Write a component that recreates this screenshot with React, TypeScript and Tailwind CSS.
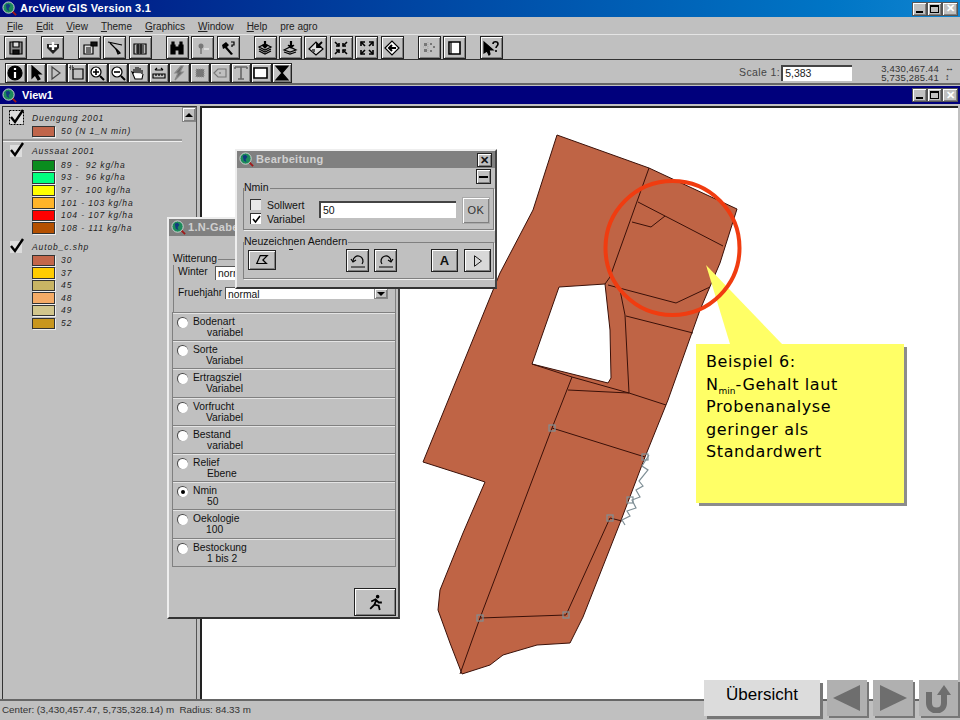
import type { ReactNode } from 'react'

const bevel = 'bg-[#c0c0c0] border border-[#222] shadow-[inset_1px_1px_0_#fff,inset_-1px_-1px_0_#808080]'

function Ico({ children, s = 16 }: { children: ReactNode; s?: number }) {
  return (
    <svg width={s} height={s} viewBox="0 0 16 16" fill="none" stroke="#000" strokeWidth="1.2">
      {children}
    </svg>
  )
}

function Globe({ s = 15 }: { s?: number }) {
  return (
    <svg width={s} height={s} viewBox="0 0 16 16" className="shrink-0">
      <path d="M10 10l5 5" stroke="#a01818" strokeWidth="2" />
      <circle cx="7" cy="7" r="6" fill="#1c8a5a" stroke="#d8d8d8" strokeWidth="1" />
      <path d="M4 4l3-1 2 2-2 3 1 3-3-2z" fill="#123a80" />
    </svg>
  )
}

function Tool({ w = 23, h = 23, children }: { w?: number; h?: number; children: ReactNode }) {
  return (
    <div className={`${bevel} flex items-center justify-center shrink-0`} style={{ width: w, height: h }}>
      {children}
    </div>
  )
}

function WinBtns() {
  return (
    <div className="flex ml-auto mr-[2px]">
      <div className={`${bevel} w-[15px] h-[14px] relative !border-[#555]`}>
        <div className="absolute left-[3px] bottom-[2px] w-[7px] h-[2px] bg-black" />
      </div>
      <div className={`${bevel} w-[15px] h-[14px] flex items-center justify-center !border-[#555]`}>
        <div className="w-[9px] h-[8px] border border-black border-t-2" />
      </div>
      <div className={`${bevel} w-[16px] h-[14px] flex items-center justify-center text-[11px] font-bold leading-none !border-[#555]`}>
        ✕
      </div>
    </div>
  )
}

const toolbarOne: ReactNode[][] = [
  [
    <Ico><path d="M2 2h12v12H2z" fill="#888" /><path d="M5 2h6v5H5z" fill="#ddd" /><path d="M5 10h6v4H5z" fill="#111" /></Ico>,
  ],
  [
    <Ico><path d="M2 8l6 6 6-6V4H2z" fill="#222" stroke="none" /><path d="M8 2v8M4 6h8" stroke="#fff" strokeWidth="2.4" /></Ico>,
  ],
  [
    <Ico><path d="M2 5h9v9H2z" fill="#ddd" /><path d="M4 8h5M4 10h5M4 12h5" /><path d="M9 2h6v4H9z" fill="#111" /></Ico>,
    <Ico><path d="M1 2l14 3M3 3l10 10" /><path d="M9 9l4 4-2 1z" fill="#444" /></Ico>,
    <Ico><path d="M2 4h12v10H2z" fill="#bbb" /><path d="M4 6h8M4 8h8M4 10h8M4 12h8M6 4v10M9 4v10" /></Ico>,
  ],
  [
    <Ico><path d="M2 5h4v9H2zM10 5h4v9h-4zM6 7h4v3H6z" fill="#000" /><path d="M3 2h2v3H3zM11 2h2v3h-2z" fill="#000" /></Ico>,
    <Ico><circle cx="6" cy="6" r="2.5" fill="#777" stroke="none" /><path d="M6 8v6" stroke="#666" /><path d="M9 9h5" stroke="#ddd" strokeWidth="2" /></Ico>,
    <Ico><path d="M2 5l4-3 3 3-2 2 6 7-2 1-6-7-2 1z" fill="#000" stroke="none" /><path d="M11 2h3v3h-2v2" /></Ico>,
  ],
  [
    <Ico><path d="M2 11l6 3 6-3M2 9l6 3 6-3M2 7l6-3 6 3-6 3z" /><path d="M8 1v6" strokeWidth="2.2" /><path d="M5 5l3 3 3-3" fill="#000" /></Ico>,
    <Ico><path d="M2 12l6 2 6-2M2 10l6-3 6 3-6 2z" /><path d="M9 1v6" strokeWidth="2.2" /><path d="M6 5l3 3 3-3" fill="#000" /></Ico>,
    <Ico><path d="M1 9l7-7 7 7-7 6z" fill="#ddd" /><path d="M14 2L9 7M9 3v4h4" strokeWidth="1.8" /><path d="M4 9h3v3H4z" fill="#555" stroke="none" /></Ico>,
    <Ico><path d="M2 2l4 4M14 2l-4 4M2 14l4-4M14 14l-4-4" strokeWidth="1.6" /><path d="M6 3v3H3M10 3v3h3M6 13v-3H3M10 13v-3h3" strokeWidth="1.6" /></Ico>,
    <Ico><path d="M6 6L2 2M10 6l4-4M6 10l-4 4M10 10l4 4" strokeWidth="1.6" /><path d="M2 6V2h4M14 6V2h-4M2 10v4h4M14 10v4h-4" strokeWidth="1.6" /></Ico>,
    <Ico><path d="M1 8l7-7 7 7-7 7z" fill="#fff" /><path d="M12 8H5M8 5L5 8l3 3" strokeWidth="2" /></Ico>,
  ],
  [
    <Ico><path d="M3 3h3v3H3zM3 9h3v3H3zM9 3h2v2H9zM12 6h2v2h-2zM9 10h2v2H9z" fill="#777" stroke="none" /><path d="M7 2v12M2 7h5" stroke="#aaa" strokeDasharray="1 1" /></Ico>,
    <Ico><path d="M3 2h11v12H3z" fill="#fff" strokeWidth="1.6" /><path d="M5 2v12" /></Ico>,
  ],
  [
    <Ico><path d="M1 2v11l3-2 2 4 1-1-1-4h4z" fill="#000" /><path d="M10 4c0-3 5-3 5 0 0 2-2 2-2 4M13 10v2" strokeWidth="1.6" /></Ico>,
  ],
]

const toolbarTwo: ReactNode[] = [
  <Ico><circle cx="8" cy="8" r="7" fill="#000" /><path d="M8 3v2M8 7v6" stroke="#fff" strokeWidth="2.2" /></Ico>,
  <Ico><path d="M4 1v12l3-3 3 5 2-1-3-5h4z" fill="#000" /></Ico>,
  <Ico><path d="M4 2v12l8-6z" stroke="#444" /></Ico>,
  <Ico><path d="M4 4h10v10H4z" /><path d="M1 1h3v3H1z" fill="#aaa" strokeDasharray="1 1" /></Ico>,
  <Ico><circle cx="7" cy="7" r="5" fill="#fff" /><path d="M4 7h6M7 4v6" strokeWidth="1.6" /><path d="M11 11l4 4" strokeWidth="2" /></Ico>,
  <Ico><circle cx="7" cy="7" r="5" fill="#fff" /><path d="M4 7h6" strokeWidth="1.6" /><path d="M11 11l4 4" strokeWidth="2" /></Ico>,
  <Ico><path d="M4 8V4M6 8V2M8 8V2M10 8V3M12 9V5M4 8L2 7l3 7h7l1-5" fill="#fff" strokeWidth="1.1" /></Ico>,
  <Ico><path d="M2 9h12v4H2zM5 9v2M8 9v2M11 9v2" /><path d="M4 5h8M4 5l2-2M12 5l-2-2" /></Ico>,
  <Ico><path d="M10 1L4 8h3l-3 7 8-8H9l3-6z" fill="#666" stroke="#888" /></Ico>,
  <Ico><path d="M4 4h8v8H4z" fill="#777" stroke="#999" strokeDasharray="1 1" /></Ico>,
  <Ico><path d="M2 8l4-4h8v8H6z" stroke="#777" /><path d="M7 8h2" stroke="#666" /></Ico>,
  <Ico><path d="M2 2h12M8 2v12M5 14h6M2 2v2M14 2v2" stroke="#666" strokeWidth="1.6" /></Ico>,
  <Ico><path d="M1 3h13v10H1z" fill="#fff" strokeWidth="1.6" /></Ico>,
  <Ico><path d="M2 1h12L8 8l6 7H2l6-7z" fill="#000" /></Ico>,
]

const groups = [
  {
    title: 'Duengung 2001',
    focus: true,
    items: [['#c0654a', '50 (N 1_N min)']],
  },
  {
    title: 'Aussaat 2001',
    items: [
      ['#0a8c1e', '89 -  92 kg/ha'],
      ['#00ff7f', '93 -  96 kg/ha'],
      ['#ffff00', '97 -  100 kg/ha'],
      ['#ffb428', '101 - 103 kg/ha'],
      ['#ff0000', '104 - 107 kg/ha'],
      ['#b45000', '108 - 111 kg/ha'],
    ],
  },
  {
    title: 'Autob_c.shp',
    items: [
      ['#c4664a', '30'],
      ['#ffcc00', '37'],
      ['#c8b464', '45'],
      ['#f5ab66', '48'],
      ['#d2c68c', '49'],
      ['#c8961e', '52'],
    ],
  },
]

const criteria = [
  ['Bodenart', 'variabel', 14],
  ['Sorte', 'Variabel', 13],
  ['Ertragsziel', 'Variabel', 13],
  ['Vorfrucht', 'Variabel', 13],
  ['Bestand', 'variabel', 14],
  ['Relief', 'Ebene', 14],
  ['Nmin', '50', 14],
  ['Oekologie', '100', 13],
  ['Bestockung', '1 bis 2', 14],
] as const

const handles = [
  [552, 428], [645, 457], [480, 618], [566, 615], [610, 518], [630, 500],
]

function MapDrawing() {
  return (
    <svg className="absolute left-0 top-0" width="960" height="720" viewBox="0 0 960 720">
      <path
        d="M557 135L649 168L737 209L720 263L700 310L668 400L645 457L620 523L583 617L570 643L537 645L503 655L490 665L462 674L450 643L438 610L440 590L463 533L485 482L470 477L423 462L500 273L533 210ZM559 287L532 364L608 383L611 378L610 330L605 284Z"
        fill="#bf6445"
        fillRule="evenodd"
        stroke="#3a1008"
        strokeWidth="1"
      />
      <g fill="none" stroke="#3a1008" strokeWidth="1">
        <path d="M649 168L610 277L605 284" />
        <path d="M638 202L723 246" />
        <path d="M665 216L651 227L632 222" />
        <path d="M608 285L676 303L710 287" />
        <path d="M620 290L625 315L629 393" />
        <path d="M626 316L693 333" />
        <path d="M532 364L572 377L629 393L666 405" />
        <path d="M572 377L563 400L552 428L480 618L460 674" />
        <path d="M568 390L629 393" />
        <path d="M552 428L645 457" />
        <path d="M480 618L566 615L610 518L622 521" />
      </g>
      <g fill="none" stroke="#7f8f96" strokeWidth="1.2">
        {handles.map(([x, y]) => (
          <rect key={`${x}-${y}`} x={x - 3} y={y - 3} width="6" height="6" />
        ))}
        <path d="M649 455L642 466L648 470L639 481L643 486L636 490L640 497L632 500L636 508L627 511L630 516L622 520L625 525" />
      </g>
      <path d="M706 265L782 344L730 344Z" fill="#ffff66" />
      <circle cx="672.5" cy="248" r="67" fill="none" stroke="#f03c10" strokeWidth="4" />
    </svg>
  )
}

function Group({ label, className, children }: { label: string; className: string; children: ReactNode }) {
  return (
    <div className={`absolute border border-[#808080] shadow-[1px_1px_0_#eee] ${className}`}>
      <span className="absolute left-0 -top-[8px] bg-[#c0c0c0] pr-px leading-[12px]">{label}</span>
      {children}
    </div>
  )
}

function NGabeWindow() {
  return (
    <div className="absolute left-[167px] top-[217px] w-[233px] h-[402px] bg-[#c0c0c0] border-l-2 border-t-2 border-l-[#eee] border-t-[#eee] border-r-2 border-b-2 border-r-[#444] border-b-[#333] text-[10.3px] text-[#111]">
      <div className="h-[17px] bg-[#808080] flex items-center gap-[2px] pl-[2px] text-white font-bold text-[11px] tracking-[0.3px]">
        <Globe />
        <span className="text-[#d0d0d0]">1.N-Gabe</span>
      </div>
      <div className="absolute left-[4px] right-[2px] top-[40px] h-[54px] border border-[#808080]">
        <span className="absolute -left-px -top-[7px] bg-[#c0c0c0] pr-px leading-[12px]">Witterung</span>
        <span className="absolute left-[4px] top-[4px]">Winter</span>
        <div className="absolute left-[41px] top-[6px] w-[150px] h-[14px] bg-white pl-[2px] leading-[14px] border-t border-l border-[#555]">normal</div>
        <span className="absolute left-[4px] top-[25px]">Fruehjahr</span>
        <div className="absolute left-[51px] top-[27px] w-[163px] h-[12px] bg-white pl-[2px] leading-[13px] border-t border-l border-[#555]">normal</div>
        <div className={`${bevel} absolute left-[200px] top-[28px] w-[14px] h-[11px] flex items-center justify-center !border-[#888]`}>
          <div className="border-x-[4px] border-x-transparent border-t-[4px] border-t-black" />
        </div>
      </div>
      <div className="absolute left-[3px] right-[2px] top-[93px] border-b border-[#808080]">
        {criteria.map(([name, value, indent]) => (
          <div key={name} className="h-[28.2px] border-t border-x border-[#808080] relative shadow-[inset_0_1px_0_#e4e4e4]">
            <div className="absolute left-[4px] top-[4px] w-[11px] h-[11px] rounded-full bg-white border-l border-t border-[#444] flex items-center justify-center">
              {name === 'Nmin' && <div className="w-[4px] h-[4px] rounded-full bg-black" />}
            </div>
            <div className="absolute left-[20px] top-[3px] leading-[11px]">
              {name}
              <div style={{ paddingLeft: indent }}>{value}</div>
            </div>
          </div>
        ))}
      </div>
      <div className="absolute right-[2px] bottom-[1px] w-[42px] h-[28px] bg-[#c0c0c0] border border-[#222] shadow-[inset_1px_1px_0_#fff,inset_-1px_-1px_0_#808080] flex items-center justify-center">
        <Ico s={17}>
          <circle cx="10" cy="2.5" r="1.7" fill="#000" stroke="none" />
          <path d="M9 5L7 10L3 14M7 10l4 1 1 4M4 7l4-2 3 3 3 0" strokeWidth="1.7" />
        </Ico>
      </div>
    </div>
  )
}

function BearbeitungWindow() {
  const btn = 'absolute bg-[#c0c0c0] border border-[#222] shadow-[inset_1px_1px_0_#fff,inset_-1px_-1px_0_#808080] flex items-center justify-center'
  return (
    <div className="absolute left-[235px] top-[149px] w-[262px] h-[140px] bg-[#c0c0c0] border-l-2 border-t-2 border-l-[#eee] border-t-[#eee] border-r-2 border-b-2 border-r-[#444] border-b-[#333] text-[10.5px] text-[#111]">
      <div className="h-[17px] bg-[#808080] flex items-center gap-[2px] pl-[2px] font-bold text-[11px] tracking-[0.3px] text-[#d0d0d0]">
        <Globe />
        <span>Bearbeitung</span>
      </div>
      <div className={`${btn} left-[240px] top-[2px] w-[15px] h-[14px] text-[11px] font-bold leading-none`}>✕</div>
      <div className={`${btn} left-[239px] top-[18px] w-[15px] h-[15px]`}>
        <div className="w-[9px] h-[2px] bg-black" />
      </div>
      <Group label="Nmin" className="left-[6px] top-[37px] w-[251px] h-[42px]">
        <div className="absolute left-[6px] top-[10px] w-[11px] h-[11px] bg-[#e8e8e8] border-l border-t border-[#333]" />
        <span className="absolute left-[23px] top-[9px]">Sollwert</span>
        <div className="absolute left-[6px] top-[24px] w-[11px] h-[11px] bg-white border-l border-t border-[#333] flex items-center justify-center">
          <svg width="9" height="9" viewBox="0 0 9 9"><path d="M1 4l2.5 3L8 1" fill="none" stroke="#000" strokeWidth="1.6" /></svg>
        </div>
        <span className="absolute left-[23px] top-[23px]">Variabel</span>
        <div className="absolute left-[75px] top-[12px] w-[137px] h-[17px] bg-white border-l-2 border-t-2 border-[#444] pl-[2px] leading-[14px]">50</div>
        <div className={`${btn} left-[218px] top-[8px] w-[28px] h-[27px] !border-[#aaa] text-[11px] text-[#333] tracking-[0.5px]`}>OK</div>
      </Group>
      <Group label="Neuzeichnen  Aendern" className="left-[6px] top-[91px] w-[251px] h-[37px]">
        <div className="absolute left-[45px] top-[6px] w-[4px] h-px bg-[#222]" />
        <div className={`${btn} left-[4px] top-[7px] w-[28px] h-[20px]`}>
          <Ico s={14}><path d="M2 12L6 3h8l-5 5 4 4z" strokeWidth="1.4" /></Ico>
        </div>
        <div className={`${btn} left-[102px] top-[6px] w-[23px] h-[23px]`}>
          <Ico s={16}><path d="M3 8a5 5 0 1 1 9 3M1 14h14" /><path d="M1 6l2 3 3-2" /></Ico>
        </div>
        <div className={`${btn} left-[130px] top-[6px] w-[23px] h-[23px]`}>
          <Ico s={16}><path d="M13 8a5 5 0 1 0-9 3M1 14h14" /><path d="M15 6l-2 3-3-2" /></Ico>
        </div>
        <div className={`${btn} left-[187px] top-[6px] w-[27px] h-[23px] font-bold text-[13px]`}>A</div>
        <div className={`${btn} left-[220px] top-[6px] w-[27px] h-[23px] !bg-[#d8d8d8]`}>
          <Ico s={14}><path d="M4 2v12l8-6z" strokeWidth="1" /></Ico>
        </div>
      </Group>
    </div>
  )
}

export default function App() {
  return (
    <div className="relative w-[960px] h-[720px] overflow-hidden bg-[#c0c0c0] font-['Liberation_Sans',Arial,sans-serif] text-[#222] flex flex-col">
      {/* app title */}
      <div className="h-[17px] shrink-0 flex items-center gap-[3px] pl-[2px] bg-gradient-to-r from-[#000a80] to-[#1084d0] text-white font-bold text-[11px]">
        <Globe />
        <span className="tracking-[0.2px]">ArcView GIS Version 3.1</span>
        <WinBtns />
      </div>

      <div className="h-[17px] shrink-0 flex items-center gap-[13px] pl-[7px] text-[10px] pt-[2px]">
        <span><u>F</u>ile</span>
        <span><u>E</u>dit</span>
        <span><u>V</u>iew</span>
        <span><u>T</u>heme</span>
        <span><u>G</u>raphics</span>
        <span><u>W</u>indow</span>
        <span><u>H</u>elp</span>
        <span>pre agro</span>
      </div>

      <div className="h-[26px] shrink-0 flex items-center gap-[14px] pl-[4px] pt-[1px] border-t border-t-[#e4e4e4] border-b border-b-[#333]">
        {toolbarOne.map((group, i) => (
          <div key={i} className="flex gap-[2.4px]">
            {group.map((icon, j) => (
              <Tool key={j}>{icon}</Tool>
            ))}
          </div>
        ))}
      </div>

      <div className="h-[25px] shrink-0 flex items-center pl-[5px] pt-[2px] border-b-2 border-b-[#666]">
        <div className="flex">
          {toolbarTwo.map((icon, i) => (
            <Tool key={i} w={20.5} h={20}>{icon}</Tool>
          ))}
        </div>
        <span className="ml-[447px] text-[10.5px] tracking-[0.4px] text-[#444]">Scale 1:</span>
        <div className="ml-px w-[71px] h-[16px] bg-white border-l-2 border-t-2 border-[#444] pl-[2px] text-[10.5px] leading-[13px]">5,383</div>
        <div className="ml-[29px] text-[9.5px] leading-[9px] text-[#333] tracking-[0.2px]">
          <div>3,430,467.44</div>
          <div>5,735,285.41</div>
        </div>
        <div className="ml-[6px] text-[9px] leading-[9px] font-bold">
          <div>↔</div>
          <div>↕</div>
        </div>
      </div>

      {/* view window */}
      <div className="h-[18px] shrink-0 flex items-center gap-[5px] pl-[2px] bg-[#00007c] text-white font-bold text-[11px] mt-px">
        <Globe />
        <span>View1</span>
        <WinBtns />
      </div>

      <div className="flex-1 min-h-0 flex pl-[2px] pr-[2px] pt-[2px]">
        <div className="w-[180px] border-t border-l border-[#333] flex flex-col italic text-[8.5px] tracking-[0.9px] text-[#222] shrink-0">
          {groups.map((g, i) => (
            <div key={g.title} className={i === 0 ? 'h-[34px] border-b-2 border-b-[#999] pt-[4px] shadow-[0_1px_0_#eee]' : i === 1 ? 'pt-[3px]' : 'pt-[6px]'}>
              <div className={`h-[14px] flex items-center relative pl-[29px] ${i === 1 ? 'mb-px' : ''}`}>
                <svg className="absolute left-[6px] -top-[2px]" width="16" height="16" viewBox="0 0 16 16">
                  {g.focus && <rect x="0.5" y="1.5" width="14" height="14" fill="#ddd" stroke="#000" strokeDasharray="2 1" />}
                  {!g.focus && <rect x="1" y="3" width="12" height="12" fill="#ddd" />}
                  <path d="M2 8l4 5 8-12" fill="none" stroke="#000" strokeWidth="2.4" />
                </svg>
                {g.title}
              </div>
              {g.items.map(([color, label]) => (
                <div key={label} className="h-[12.55px] flex items-center pl-[29px] gap-[6px]">
                  <div className="w-[23px] h-[11.5px] border border-[#333] shadow-[1px_1px_0_#eee] shrink-0" style={{ backgroundColor: color }} />
                  <span className="whitespace-pre">{label}</span>
                </div>
              ))}
            </div>
          ))}
        </div>
        <div className="w-[15px] shrink-0 border-t border-[#333] border-r border-r-[#555] bg-[#c0c0c0]">
          <div className={`${bevel} h-[15px] flex items-center justify-center !border-[#888]`}>
            <div className="border-x-[4px] border-x-transparent border-b-[4px] border-b-black" />
          </div>
        </div>
        <div className="ml-[3px] flex-1 bg-white border-l-2 border-t-2 border-[#222]" />
      </div>

      <div className="h-[21px] shrink-0 border-t-2 border-t-[#666] flex items-center pl-[2px] text-[9.8px] text-[#333]">
        Center: (3,430,457.47, 5,735,328.14) m&nbsp; Radius: 84.33 m
      </div>

      <MapDrawing />

      {/* note on top of the map */}
      <div className="absolute left-[696px] top-[344px] w-[208px] h-[159px] bg-[#ffff66] shadow-[3px_3px_0_#8c8c8c] pl-[10px] pt-[7px] font-['DejaVu_Sans',sans-serif] text-[16px] tracking-[0.6px] leading-[22.5px] text-black">
        <div>Beispiel 6:</div>
        <div>N<sub className="text-[9px] align-baseline relative top-[4px] tracking-normal">min</sub>-Gehalt laut</div>
        <div>Probenanalyse</div>
        <div>geringer als</div>
        <div>Standardwert</div>
      </div>

      <NGabeWindow />
      <BearbeitungWindow />

      {/* slide navigation */}
      <div className="absolute left-[704px] top-[680px] flex gap-[6px]">
        <div className="w-[116px] h-[36px] bg-[#dcdcdc] shadow-[3px_3px_0_#777] flex items-center justify-center text-[17px] text-black pb-[7px]">Übersicht</div>
        <div className="w-[40px] h-[36px] ml-[1px] bg-[#b0b0b0] shadow-[2px_2px_0_#777] flex items-center justify-center">
          <svg width="30" height="28" viewBox="0 0 30 28"><path d="M28 1v26L1 14z" fill="#6e6e6e" /></svg>
        </div>
        <div className="w-[40px] h-[36px] bg-[#b0b0b0] shadow-[2px_2px_0_#777] flex items-center justify-center">
          <svg width="30" height="28" viewBox="0 0 30 28"><path d="M2 1v26l27-13z" fill="#6e6e6e" /></svg>
        </div>
        <div className="w-[39px] h-[36px] bg-[#b0b0b0] shadow-[2px_2px_0_#777] flex items-center justify-center">
          <svg width="28" height="30" viewBox="0 0 28 30">
            <path d="M4 9v11c0 10 15 10 15 0V11" fill="none" stroke="#6e6e6e" strokeWidth="6" />
            <path d="M12 12l7-10 7 10z" fill="#6e6e6e" />
          </svg>
        </div>
      </div>
    </div>
  )
}
